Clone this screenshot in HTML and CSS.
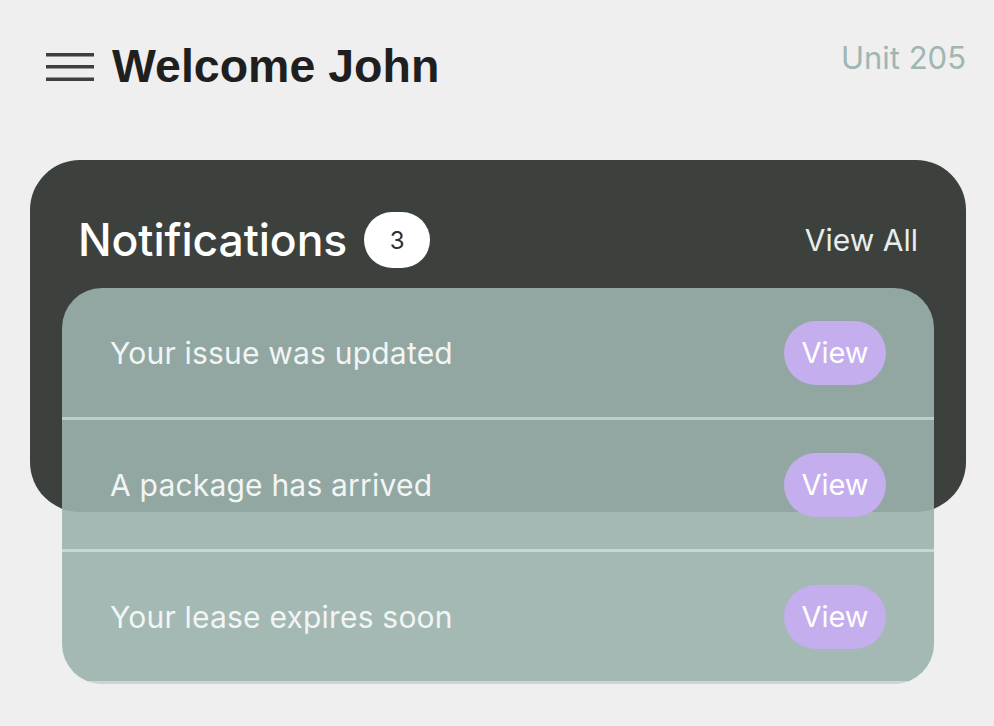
FILE: index.html
```html
<!DOCTYPE html>
<html>
  <head>
    <title>Home</title>
    <link rel="stylesheet" href="styles.css">
  </head>
  <body>
    <div class="page">
      <header class="topbar">
        <div class="greeting">
          <button class="menu-btn" aria-label="Menu">
            <svg width="48" height="28" viewBox="0 0 48 28">
              <rect x="0" y="0" width="48" height="3.5" fill="#3c413e"/>
              <rect x="0" y="12" width="48" height="3.5" fill="#3c413e"/>
              <rect x="0" y="24.5" width="48" height="3.5" fill="#3c413e"/>
            </svg>
          </button>
          <h1>Welcome John</h1>
        </div>
        <span class="unit">Unit 205</span>
      </header>

      <section class="panel">
        <div class="panel-head">
          <div class="panel-title">
            <h2>Notifications</h2>
            <span class="badge">3</span>
          </div>
          <a class="view-all" href="#">View All</a>
        </div>
      </section>

      <ul class="notes">
        <li class="note">
          <span>Your issue was updated</span>
          <button class="view-btn">View</button>
        </li>
        <li class="note">
          <span>A package has arrived</span>
          <button class="view-btn">View</button>
        </li>
        <li class="note">
          <span>Your lease expires soon</span>
          <button class="view-btn">View</button>
        </li>
      </ul>
    </div>
  </body>
</html>
```

FILE: styles.css
```css
body {
  font-family: Inter, "Noto Sans", sans-serif;
  background-color: #efefef;
  margin: 0;
  padding: 0;
}

.page {
  padding: 38px 28px 42px 30px;
}

.topbar {
  display: flex;
  justify-content: space-between;
  align-items: flex-start;
  padding-left: 16px;
  height: 122px;
}

.greeting {
  display: flex;
  align-items: center;
  gap: 18px;
}

.menu-btn {
  background: none;
  border: none;
  padding: 0;
  display: flex;
  margin-top: 1px;
}

h1 {
  margin: 0;
  font-family: "Liberation Sans", Arial, sans-serif;
  font-weight: bold;
  font-size: 46.5px;
  line-height: 56px;
  color: #1e1f1e;
}

.unit {
  font-size: 31px;
  line-height: 36px;
  color: #9fb6b2;
  margin-top: 2px;
}

.panel {
  background-color: #3c413e;
  border-radius: 50px;
  height: 352px;
}

.panel-head {
  display: flex;
  justify-content: space-between;
  align-items: center;
  box-sizing: border-box;
  height: 128px;
  padding: 52px 48px 20px 48px;
}

.panel-title {
  display: flex;
  align-items: center;
  gap: 17px;
}

h2 {
  margin: 0;
  font-weight: 500;
  font-size: 44.5px;
  color: #ffffff;
  letter-spacing: -0.1px;
}

.badge {
  display: flex;
  align-items: center;
  justify-content: center;
  width: 66px;
  height: 56px;
  border-radius: 28px;
  background-color: #ffffff;
  color: #2d302e;
  font-size: 24px;
}

.view-all {
  color: #e9eeeb;
  font-size: 30px;
  text-decoration: none;
}

.notes {
  list-style: none;
  margin: -224px 32px 0;
  padding: 0;
  background-color: rgba(155, 178, 173, 0.9);
  border-radius: 40px;
  overflow: hidden;
  position: relative;
}

.note {
  display: flex;
  justify-content: space-between;
  align-items: center;
  height: 129px;
  padding: 0 48px 0 48px;
  border-bottom: 3px solid rgba(255, 255, 255, 0.42);
  color: #f2f5f4;
  font-size: 30px;
  letter-spacing: 0.2px;
}

.view-btn {
  width: 102px;
  height: 64px;
  border: none;
  border-radius: 32px;
  background-color: #c5aeee;
  color: #ffffff;
  font-family: Inter, sans-serif;
  font-size: 29px;
  padding: 0;
  cursor: pointer;
}
```
